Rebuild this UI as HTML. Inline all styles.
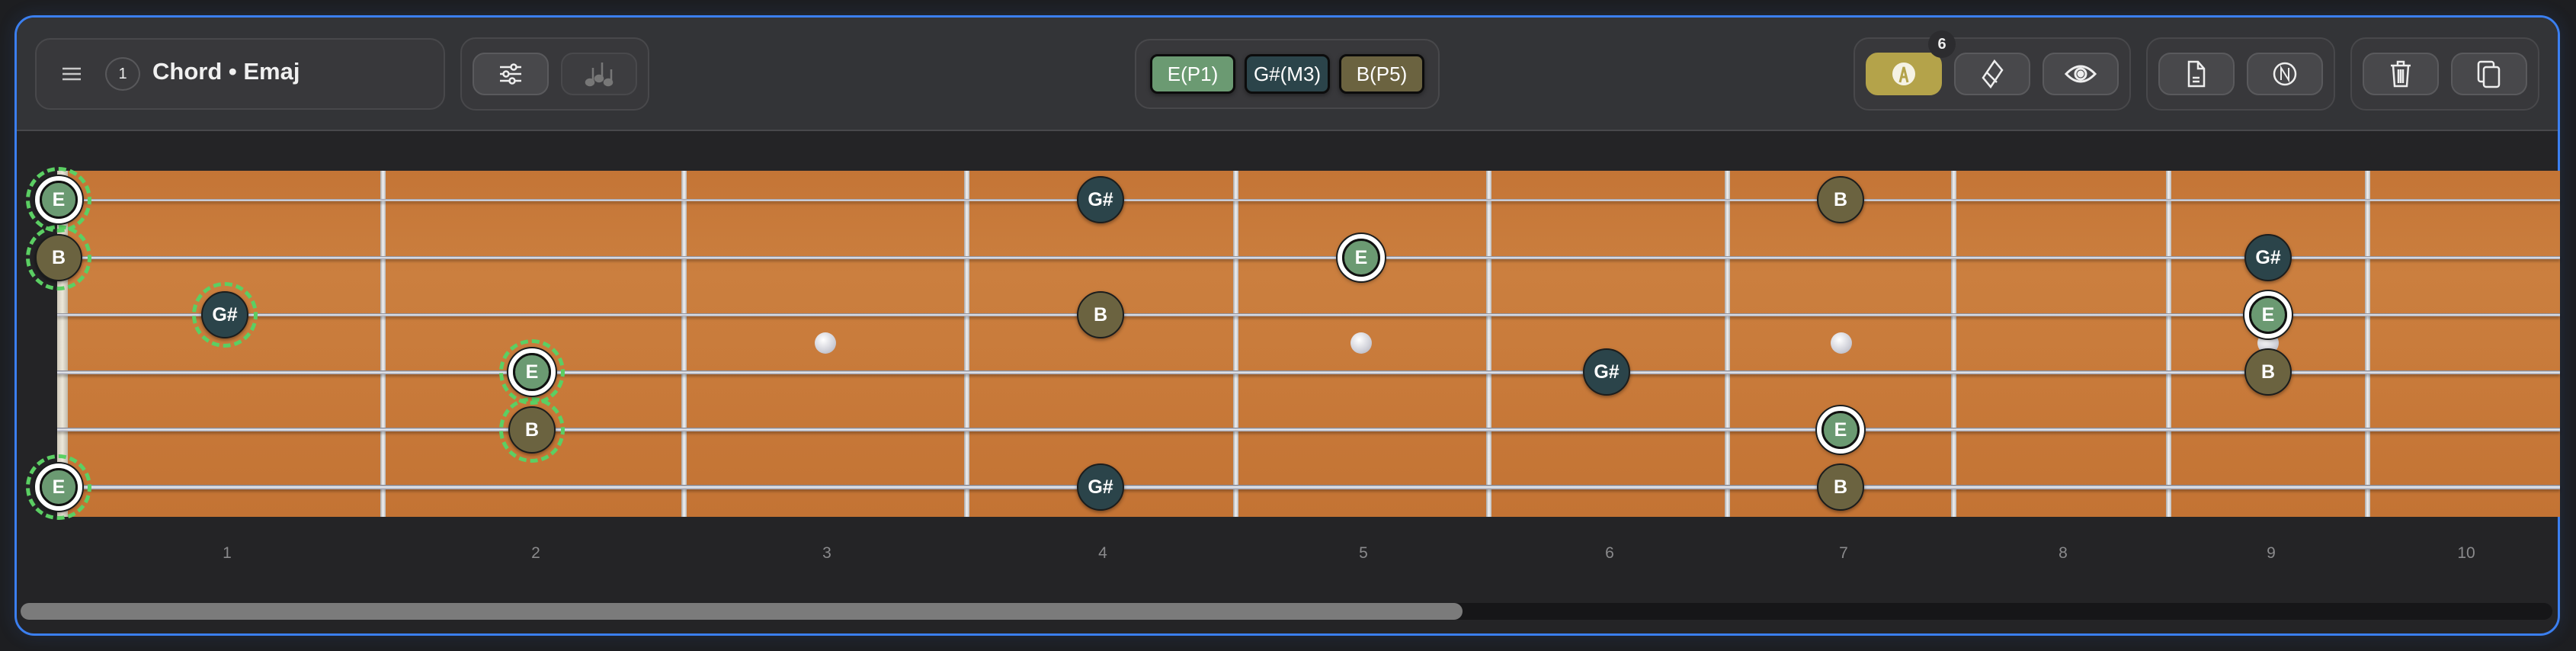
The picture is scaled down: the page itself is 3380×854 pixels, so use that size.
<!DOCTYPE html>
<html><head><meta charset="utf-8"><style>
*{box-sizing:border-box;margin:0;padding:0}
body{width:3380px;height:854px;background:#1d1e21;position:relative;overflow:hidden;font-family:"Liberation Sans",sans-serif}
.abs{position:absolute}
.panel{left:19px;top:20px;width:3340px;height:814px;border:3px solid #3b7ff0;border-radius:26px;background:#242426;overflow:hidden;box-shadow:0 0 24px rgba(59,127,240,.15)}
.head{left:0;top:0;width:100%;height:149px;background:#333437;border-bottom:2px solid #48484b}
.grp{background:#38383b;border:2px solid #48484b;border-radius:20px}
.btn{background:#48484b;border:2px solid #5a5a5d;border-radius:16px;display:flex;align-items:center;justify-content:center}
.chip{border:3px solid #0c0c0c;border-radius:10px;color:#fff;font-size:26px;display:flex;align-items:center;justify-content:center;box-shadow:0 2px 6px rgba(0,0,0,.4)}
.wood{left:75px;top:224px;width:3284px;height:454px;background:linear-gradient(180deg,#c47536 0%,#cb7f3f 30%,#c87a3a 60%,#c37334 100%)}
.fret{top:224px;width:7px;height:454px;background:linear-gradient(90deg,#aaa,#f1f1f3,#bbb)}
.str{left:75px;width:3284px;background:linear-gradient(180deg,#6d7080,#eef0f4 45%,#9a9caa);box-shadow:0 3px 3px rgba(0,0,0,.25)}
.dot{width:28px;height:28px;border-radius:50%;background:radial-gradient(circle at 40% 35%,#fff,#cfd0d8 60%,#a9aab5);margin:-14px 0 0 -14px}
.n{width:62px;height:62px;margin:-31px 0 0 -31px;border-radius:50%;border:2px solid #1b1d1d;color:#fff;font-weight:bold;font-size:25px;display:flex;align-items:center;justify-content:center;box-shadow:0 2px 5px rgba(0,0,0,.4)}
.E{background:#6b9a72}.G{background:#2b444a}.B{background:#6b6340}
.ring{border:6px solid #fff;box-shadow:0 0 0 2px #1b1d1d,0 2px 6px rgba(0,0,0,.5)}
.ring span{position:absolute;inset:0;border-radius:50%;border:3px solid #111}
.ring{position:absolute}
.dash{width:86px;height:86px;margin:-43px 0 0 -43px;border-radius:50%;border:5px dashed #5bcf63}
.num{top:714px;color:#8a8a8c;font-size:21px;width:40px;margin-left:-20px;text-align:center}
</style></head><body>
<div class="abs panel">
 <div class="abs head"></div>
</div>
<!-- header contents (absolute to body) -->
<div class="abs grp" style="left:46px;top:50px;width:538px;height:94px"></div>
<svg class="abs" style="left:80px;top:86px" width="28" height="22"><g stroke="#c8c8c8" stroke-width="2.5"><line x1="2" y1="4" x2="26" y2="4"/><line x1="2" y1="11" x2="26" y2="11"/><line x1="2" y1="18" x2="26" y2="18"/></g></svg>
<div class="abs" style="left:138px;top:75px;width:46px;height:44px;border-radius:50%;border:2px solid #58585b;background:#3a3a3d;color:#eee;font-size:20px;display:flex;align-items:center;justify-content:center">1</div>
<div class="abs" style="left:200px;top:76px;color:#f0f0f0;font-size:31px;font-weight:bold">Chord • Emaj</div>

<div class="abs grp" style="left:604px;top:49px;width:248px;height:96px"></div>
<div class="abs btn" style="left:620px;top:69px;width:100px;height:56px"><svg width="32" height="30" fill="none" stroke="#eee" stroke-width="2.5"><line x1="2" y1="6" x2="30" y2="6"/><line x1="2" y1="15" x2="30" y2="15"/><line x1="2" y1="24" x2="30" y2="24"/><circle cx="20" cy="6" r="3.5" fill="#48484b"/><circle cx="10" cy="15" r="3.5" fill="#48484b"/><circle cx="18" cy="24" r="3.5" fill="#48484b"/></svg></div>
<div class="abs btn" style="left:736px;top:69px;width:100px;height:56px;background:#3d3d40;border-color:#49494c"><svg width="40" height="36" fill="#777" stroke="#777" stroke-width="2.5"><ellipse cx="8" cy="29" rx="5" ry="4"/><line x1="12" y1="29" x2="12" y2="10"/><ellipse cx="20" cy="24" rx="5" ry="4"/><line x1="24" y1="24" x2="24" y2="3"/><ellipse cx="32" cy="29" rx="5" ry="4"/><line x1="36" y1="29" x2="36" y2="12"/></svg></div>

<div class="abs grp" style="left:1489px;top:51px;width:400px;height:92px"></div>
<div class="abs chip E" style="left:1509px;top:71px;width:112px;height:52px">E(P1)</div>
<div class="abs chip G" style="left:1633px;top:71px;width:112px;height:52px">G#(M3)</div>
<div class="abs chip B" style="left:1757px;top:71px;width:112px;height:52px">B(P5)</div>

<div class="abs grp" style="left:2432px;top:49px;width:364px;height:96px"></div>
<div class="abs btn" style="left:2448px;top:69px;width:100px;height:56px;background:#b4a34a;border-color:#b4a34a"><svg width="34" height="34"><circle cx="17" cy="17" r="15" fill="#f5f2e4"/><path d="M12 28 L17 8 L22 28 M13.5 21 H20.5" stroke="#b4a34a" stroke-width="3" fill="none"/></svg></div>
<div class="abs" style="left:2530px;top:40px;width:36px;height:36px;border-radius:50%;background:#2c2c2f;color:#eee;font-weight:bold;font-size:20px;display:flex;align-items:center;justify-content:center">6</div>
<div class="abs btn" style="left:2564px;top:69px;width:100px;height:56px"><svg width="34" height="40" fill="none" stroke="#eee" stroke-width="2.5"><path d="M20 3 L30 15 L15 37 L5 25 Z M10 18 L23 31"/></svg></div>
<div class="abs btn" style="left:2680px;top:69px;width:100px;height:56px"><svg width="42" height="28" fill="none" stroke="#eee" stroke-width="3"><path d="M2 14 Q21 -6 40 14 Q21 34 2 14 Z"/><circle cx="21" cy="14" r="7"/><circle cx="21" cy="14" r="3" fill="#eee"/></svg></div>

<div class="abs grp" style="left:2816px;top:49px;width:248px;height:96px"></div>
<div class="abs btn" style="left:2832px;top:69px;width:100px;height:56px"><svg width="28" height="38" fill="none" stroke="#eee" stroke-width="2.5"><path d="M4 3 H16 L24 12 V35 H4 Z M16 3 V12 H24 M9 24 H18 M9 29 H18"/></svg></div>
<div class="abs btn" style="left:2948px;top:69px;width:100px;height:56px"><svg width="34" height="34" fill="none" stroke="#eee" stroke-width="2.5"><circle cx="17" cy="17" r="14"/><path d="M12 25 V9 L22 25 V9" stroke-width="2"/></svg></div>

<div class="abs grp" style="left:3084px;top:49px;width:248px;height:96px"></div>
<div class="abs btn" style="left:3100px;top:69px;width:100px;height:56px"><svg width="30" height="38" fill="none" stroke="#eee" stroke-width="2.5"><path d="M2 8 H28 M11 8 V3 H19 V8 M5 8 L7 35 H23 L25 8 M12 13 V31 M15 13 V31 M18 13 V31" /></svg></div>
<div class="abs btn" style="left:3216px;top:69px;width:100px;height:56px"><svg width="34" height="38" fill="none" stroke="#eee" stroke-width="2.5"><rect x="3" y="3" width="20" height="26" rx="3"/><rect x="10" y="10" width="20" height="26" rx="3" fill="#48484b"/></svg></div>

<!-- fretboard -->
<div class="abs wood"></div>
<div class="abs" style="left:75px;top:224px;width:14px;height:454px;background:linear-gradient(90deg,#cfc9ba,#ece7da,#bfb9aa)"></div>
<div class="abs fret" style="left:499px"></div><div class="abs fret" style="left:894px"></div><div class="abs fret" style="left:1265px"></div><div class="abs fret" style="left:1618px"></div><div class="abs fret" style="left:1950px"></div><div class="abs fret" style="left:2263px"></div><div class="abs fret" style="left:2560px"></div><div class="abs fret" style="left:2842px"></div><div class="abs fret" style="left:3103px"></div>
<div class="abs str" style="top:261px;height:3px"></div>
<div class="abs str" style="top:336px;height:4px"></div>
<div class="abs str" style="top:411px;height:4px"></div>
<div class="abs str" style="top:486px;height:5px"></div>
<div class="abs str" style="top:561px;height:5px"></div>
<div class="abs str" style="top:636px;height:6px"></div>
<div class="abs dot" style="left:1083px;top:450px"></div>
<div class="abs dot" style="left:1786px;top:450px"></div>
<div class="abs dot" style="left:2416px;top:450px"></div>
<div class="abs dot" style="left:2976px;top:450px"></div>

<!-- dashed -->
<div class="abs dash" style="left:77px;top:262px"></div>
<div class="abs dash" style="left:77px;top:338px"></div>
<div class="abs dash" style="left:295px;top:413px"></div>
<div class="abs dash" style="left:698px;top:488px"></div>
<div class="abs dash" style="left:698px;top:564px"></div>
<div class="abs dash" style="left:77px;top:639px"></div>

<!-- notes -->
<div class="abs n E ring" style="left:77px;top:262px"><span></span>E</div>
<div class="abs n G" style="left:1444px;top:262px">G#</div>
<div class="abs n B" style="left:2415px;top:262px">B</div>
<div class="abs n B" style="left:77px;top:338px">B</div>
<div class="abs n E ring" style="left:1786px;top:338px"><span></span>E</div>
<div class="abs n G" style="left:2976px;top:338px">G#</div>
<div class="abs n G" style="left:295px;top:413px">G#</div>
<div class="abs n B" style="left:1444px;top:413px">B</div>
<div class="abs n E ring" style="left:2976px;top:413px"><span></span>E</div>
<div class="abs n E ring" style="left:698px;top:488px"><span></span>E</div>
<div class="abs n G" style="left:2108px;top:488px">G#</div>
<div class="abs n B" style="left:2976px;top:488px">B</div>
<div class="abs n B" style="left:698px;top:564px">B</div>
<div class="abs n E ring" style="left:2415px;top:564px"><span></span>E</div>
<div class="abs n E ring" style="left:77px;top:639px"><span></span>E</div>
<div class="abs n G" style="left:1444px;top:639px">G#</div>
<div class="abs n B" style="left:2415px;top:639px">B</div>

<!-- fret numbers -->
<div class="abs num" style="left:298px">1</div>
<div class="abs num" style="left:703px">2</div>
<div class="abs num" style="left:1085px">3</div>
<div class="abs num" style="left:1447px">4</div>
<div class="abs num" style="left:1789px">5</div>
<div class="abs num" style="left:2112px">6</div>
<div class="abs num" style="left:2419px">7</div>
<div class="abs num" style="left:2707px">8</div>
<div class="abs num" style="left:2980px">9</div>
<div class="abs num" style="left:3236px">10</div>

<!-- scrollbar -->
<div class="abs" style="left:27px;top:791px;width:3322px;height:22px;border-radius:11px;background:#161618"></div>
<div class="abs" style="left:27px;top:791px;width:1892px;height:22px;border-radius:11px;background:#7b7b7b"></div>
</body></html>
